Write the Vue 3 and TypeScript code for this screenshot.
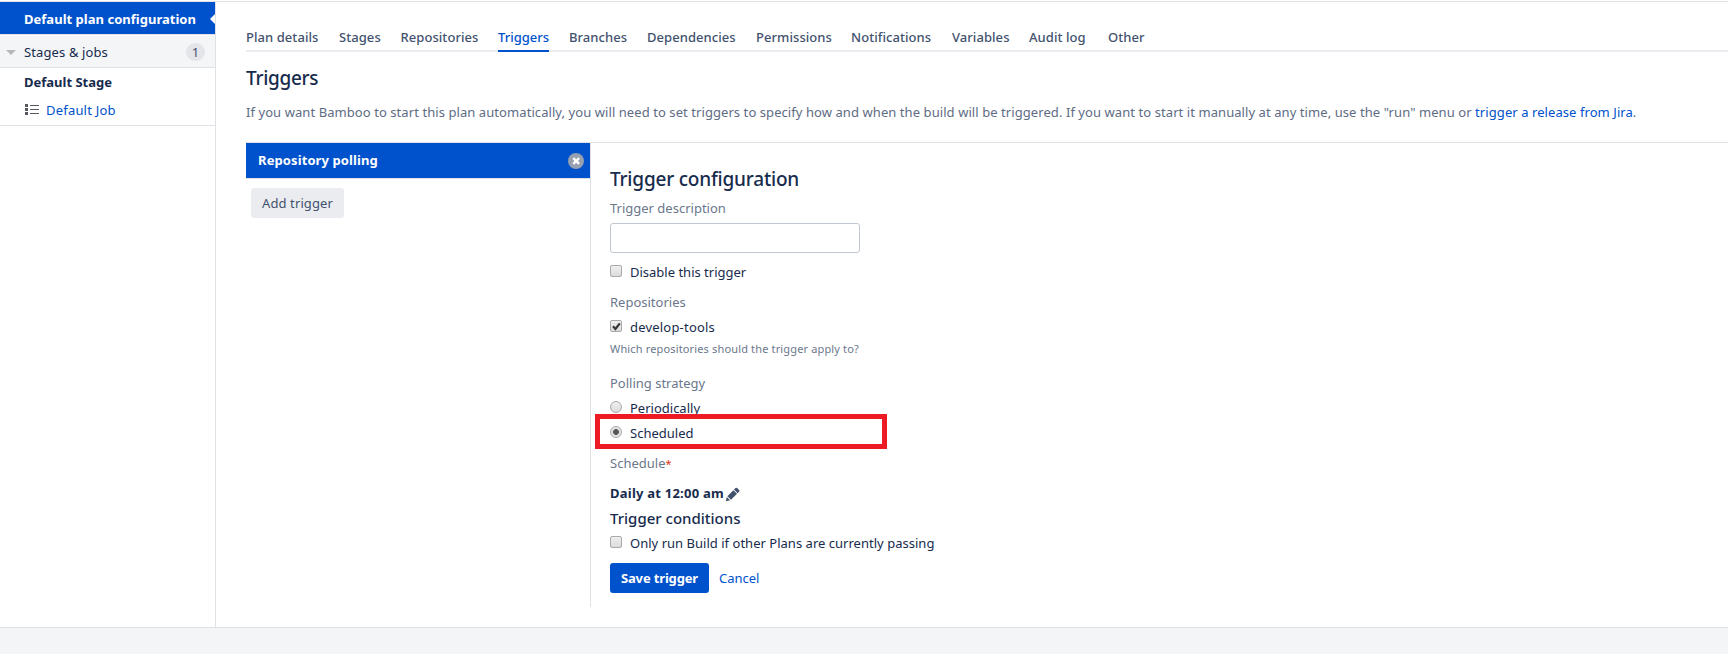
<script setup lang="ts">
import { ref } from 'vue'

const tabs: string[] = [
  'Plan details',
  'Stages',
  'Repositories',
  'Triggers',
  'Branches',
  'Dependencies',
  'Permissions',
  'Notifications',
  'Variables',
  'Audit log',
  'Other',
]
const activeTab = ref('Triggers')
const description = ref('')
const disabled = ref(false)
const repository = ref(true)
const strategy = ref<'periodically' | 'scheduled'>('scheduled')
const onlyIfPassing = ref(false)
</script>

<template>
  <div class="page">
    <div class="body">
      <aside class="sidebar">
        <div class="plan">
          Default plan configuration
          <svg class="notch" width="5" height="10" viewBox="0 0 5 10"><path d="M5 0v10L0 5z" fill="#fff" /></svg>
        </div>
        <div class="stages">
          <svg class="caret" width="10" height="5" viewBox="0 0 10 5"><path d="M0 0h10L5 5z" fill="#b8b8b8" /></svg>
          <span class="stages-label">Stages &amp; jobs</span>
          <span class="badge">1</span>
        </div>
        <div class="stage">
          <strong class="stage-name">Default Stage</strong>
          <div class="job">
            <svg width="14" height="12" viewBox="0 0 14 12" fill="#55585e">
              <path d="M0 0h3v3H0zM0 4h3v3H0zM0 8h3v3H0zM5 1h9v1H5zM5 5h9v1H5zM5 9h9v1H5z" />
            </svg>
            <a class="job-link">Default Job</a>
          </div>
        </div>
      </aside>

      <main class="content">
        <nav class="tabs">
          <a
            v-for="tab in tabs"
            :key="tab"
            class="tab"
            :class="{ active: tab === activeTab }"
            @click="activeTab = tab"
          >{{ tab }}</a>
        </nav>
        <h1>Triggers</h1>
        <p class="intro">If you want Bamboo to start this plan automatically, you will need to set triggers to specify how and when the build will be triggered. If you want to start it manually at any time, use the "run" menu or <a>trigger a release from Jira</a>.</p>

        <div class="panels">
          <section class="trigger-list">
            <div class="trigger">
              <span>Repository polling</span>
              <svg width="16" height="16" viewBox="0 0 16 16">
                <circle cx="8" cy="8" r="8" fill="#97a0af" />
                <path d="M5.3 5.1l5.8 5.8M11.1 5.1l-5.8 5.8" stroke="#fff" stroke-width="2.3" />
              </svg>
            </div>
            <button class="add">Add trigger</button>
          </section>

          <form class="config" @submit.prevent>
            <h2>Trigger configuration</h2>
            <label class="label desc-label" for="description">Trigger description</label>
            <input id="description" v-model="description" class="text-input" type="text" />
            <label class="option disable-option"><input v-model="disabled" type="checkbox" /><span>Disable this trigger</span></label>

            <div class="label repos-label">Repositories</div>
            <label class="option repo-option"><input v-model="repository" type="checkbox" /><svg v-if="repository" class="tick" width="13" height="13" viewBox="0 0 13 13"><path d="M3 6.3l2.4 2.7L9.8 3.3" fill="none" stroke="#36383b" stroke-width="2.2" /></svg><span>develop-tools</span></label>
            <div class="help">Which repositories should the trigger apply to?</div>

            <div class="label strategy-label">Polling strategy</div>
            <label class="option periodic-option"><input v-model="strategy" type="radio" value="periodically" /><span>Periodically</span></label>
            <label class="option scheduled-option"><input v-model="strategy" type="radio" value="scheduled" /><span>Scheduled</span><i class="highlight"></i></label>

            <div class="label schedule-label">Schedule<span class="required">*</span></div>
            <div class="schedule">
              <strong>Daily at 12:00 am</strong>
              <svg width="15" height="15" viewBox="0 0 15 15" fill="#42526e">
                <path d="M.8 14.2l1-4.3 3.3 3.3zM2.4 9.2l6-6 3.6 3.6-6 6zM9 2.6l1.5-1.5q.8-.8 1.6 0l2 2q.8.8 0 1.6l-1.5 1.5z" />
              </svg>
            </div>
            <h3>Trigger conditions</h3>
            <label class="option passing-option"><input v-model="onlyIfPassing" type="checkbox" /><span>Only run Build if other Plans are currently passing</span></label>
            <div class="actions">
              <button class="save">Save trigger</button>
              <a class="cancel">Cancel</a>
            </div>
          </form>
        </div>
      </main>
    </div>
    <footer class="footer"></footer>
  </div>
</template>

<style>
body {
  margin: 0;
  background: #fff;
  overflow: hidden;
}
</style>

<style scoped>
.page {
  display: flex;
  flex-direction: column;
  box-sizing: border-box;
  height: 654px;
  padding-top: 1px;
  font: 13px/20px "Noto Sans", "Open Sans", sans-serif;
  color: #172b4d;
}
.page *,
.page *::before {
  box-sizing: border-box;
}
a {
  color: #0052cc;
  text-decoration: none;
  cursor: pointer;
}
button {
  border: 0;
  border-radius: 3px;
  font: inherit;
}
.body {
  display: flex;
  flex: 1;
  border-top: 1px solid #dfe1e6;
}
.footer {
  height: 27px;
  border-top: 1px solid #dfe1e6;
  background: #f4f5f7;
}

/* Sidebar */
.sidebar {
  width: 216px;
  border-right: 1px solid #dfe1e6;
}
.plan {
  position: relative;
  height: 32px;
  padding-left: 24px;
  background: #0052cc;
  color: #fff;
  font-weight: 700;
  line-height: 34px;
  letter-spacing: 0.02px;
}
.notch {
  position: absolute;
  right: 0;
  top: 12px;
}
.stages {
  display: flex;
  align-items: center;
  height: 34px;
  border-top: 1px solid #dfe1e6;
  border-bottom: 1px solid #dfe1e6;
  box-shadow: inset 0 1px #fff;
  padding: 2px 10px 0 6px;
  background: #f4f5f7;
}
.caret {
  margin-right: 8px;
}
.stages-label {
  letter-spacing: 0.12px;
}
.badge {
  width: 19px;
  height: 18px;
  margin-left: auto;
  border-radius: 9px;
  background: #e4e5e8;
  color: #42526e;
  text-align: center;
  line-height: 18px;
}
.stage {
  height: 58px;
  padding: 4px 0 0 24px;
  border-bottom: 1px solid #dfe1e6;
}
.stage-name {
  display: block;
}
.job {
  display: flex;
  align-items: center;
  gap: 7px;
  margin-top: 8px;
}
.job svg {
  margin-left: 1px;
}
.job-link {
  letter-spacing: 0.2px;
}

/* Content */
.content {
  flex: 1;
  padding-left: 30px;
}
.tabs {
  display: grid;
  grid-template-columns: 93px 61.5px 97.5px 71px 78px 109px 95px 101px 77px 79px 1fr;
  justify-items: start;
  height: 50px;
  padding-top: 25px;
  box-shadow: inset 0 -2px #ebecf0;
}
.tab {
  height: 25px;
  color: #42526e;
  font-weight: 500;
  line-height: 20px;
  letter-spacing: 0.06px;
}
.tab.active {
  border-bottom: 2px solid #0052cc;
  color: #0052cc;
  letter-spacing: 0;
}
h1,
h2,
h3 {
  margin: 0;
  font-weight: 500;
}
h1,
h2 {
  font-size: 19px;
  line-height: 24px;
  letter-spacing: -0.3px;
}
h1 {
  margin-top: 14px;
}
h2 {
  letter-spacing: -0.2px;
}
.intro {
  margin: 12px 0 0;
  height: 40px;
  color: #5e6c84;
  letter-spacing: 0.072px;
  white-space: nowrap;
}
.panels {
  display: flex;
  align-items: flex-start;
  border-top: 1px solid #dfe1e6;
}
.trigger-list {
  width: 344px;
}
.trigger {
  display: flex;
  align-items: center;
  justify-content: space-between;
  height: 36px;
  padding: 0 6px 0 12px;
  border-bottom: 1px solid #dfe1e6;
  background: #0052cc;
  color: #fff;
  font-weight: 700;
  letter-spacing: 0.1px;
}
.trigger span {
  padding-bottom: 2px;
}
.add {
  display: block;
  width: 93px;
  height: 30px;
  margin: 9px 0 0 5px;
  padding: 0;
  background: #ebecf0;
  color: #42526e;
  letter-spacing: 0.1px;
}

/* Form */
.config {
  flex: 1;
  height: 464px;
  padding: 24px 0 0 19px;
  border-left: 1px solid #dfe1e6;
}
.label {
  display: block;
  height: 20px;
  color: #6b778c;
}
.desc-label {
  margin-top: 7px;
}
.text-input {
  display: block;
  width: 250px;
  height: 30px;
  margin-top: 5px;
  border: 1px solid #c1c7d0;
  border-radius: 3px;
  font: inherit;
}
.option {
  position: relative;
  display: flex;
  height: 20px;
}
.option span {
  margin-left: 8px;
}
.option input {
  appearance: none;
  width: 12px;
  height: 12px;
  margin: 3px 0 0;
  border: 1px solid #a9a9a9;
  border-radius: 2px;
  background: linear-gradient(#efefef, #dcdcdc);
}
.option input[type='radio'] {
  border-radius: 50%;
}
.option input[type='radio']:checked {
  background: radial-gradient(circle, #55585c 2.6px, #e4e4e4 3.2px);
}
.tick {
  position: absolute;
  left: 0;
  top: 3px;
}
.disable-option {
  margin-top: 9px;
}
.repos-label {
  margin-top: 10px;
}
.repo-option {
  margin-top: 5px;
  letter-spacing: 0.2px;
}
.help {
  height: 16px;
  margin-top: 4px;
  color: #6b778c;
  font-size: 11px;
  line-height: 16px;
  letter-spacing: 0.15px;
}
.strategy-label {
  margin-top: 16px;
}
.periodic-option,
.scheduled-option {
  margin-top: 5px;
}
.highlight {
  position: absolute;
  left: -15px;
  top: -9px;
  width: 292px;
  height: 35px;
  border: 5px solid #ed1c24;
  pointer-events: none;
}
.schedule-label {
  margin-top: 10px;
}
.required {
  color: #de350b;
  font-size: 11px;
}
.schedule {
  display: flex;
  margin-top: 10px;
  letter-spacing: 0.23px;
}
.schedule svg {
  margin: 4px 0 0 1px;
}
h3 {
  margin-top: 5px;
  font-size: 15px;
  line-height: 20px;
}
.passing-option {
  margin-top: 5px;
  letter-spacing: 0.02px;
}
.actions {
  display: flex;
  align-items: center;
  gap: 10px;
  margin-top: 10px;
}
.save {
  width: 99px;
  height: 30px;
  padding: 0;
  background: #0052cc;
  color: #fff;
  font-weight: 700;
  letter-spacing: -0.15px;
}
</style>
